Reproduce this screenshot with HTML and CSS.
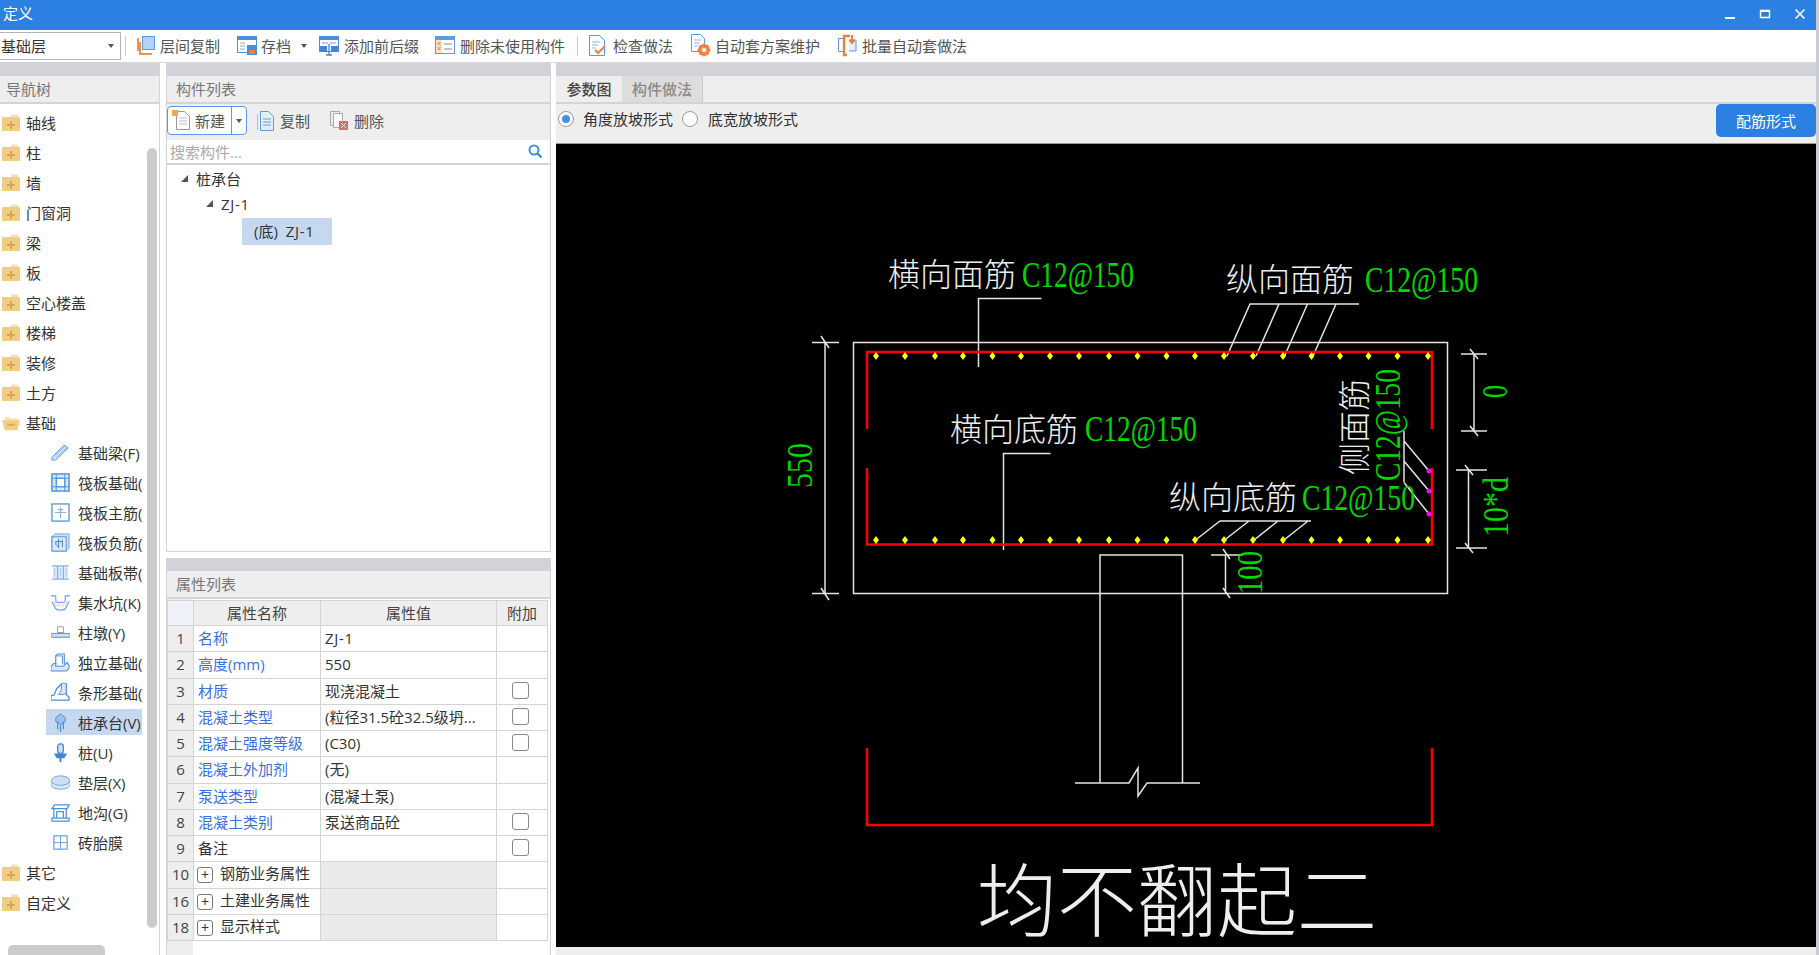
FILE: index.html
```html
<!DOCTYPE html>
<html lang="zh-CN">

<head>
    <meta charset="UTF-8">
    <title>定义</title>
    <link rel="stylesheet" href="styles.css">
</head>

<body>
    <svg class="defs" width="0" height="0">
        <symbol id="folder" viewBox="0 0 18 17">
            <path d="M9 3V1.500Q9 .5 10 .5h5q1 0 1 1V3z" fill="#f6e0b0"/>
            <rect x="0" y="3" width="18" height="14" rx="1" fill="#f0cd82"/>
            <path d="M8 7h2v3h3v2h-3v3H8v-3H5v-2h3z" fill="#d8a850"/>
        </symbol>
        <symbol id="folder-open" viewBox="0 0 20 17">
            <path d="M3 5V3q0-1 1-1h4l1 2h9v4H3z" fill="#f6e0b0"/>
            <path d="M0 6h20l-3 11H3z" fill="#f0cd82"/>
            <rect x="6" y="10" width="8" height="2" fill="#d8a850"/>
        </symbol>
        <path id="dot" d="M0-4L3 0 0 4-3 0z" fill="#ffff00"/>
    </svg>

    <div class="app">
        <header class="titlebar">
            <span class="title">定义</span>
            <div class="window-btns">
                <svg width="12" height="12" viewBox="0 0 12 12"><rect x="1" y="9" width="10" height="2" fill="#fff"/></svg>
                <svg width="12" height="12" viewBox="0 0 12 12"><path d="M1.500 2.500h9v7h-9z" fill="none" stroke="#fff" stroke-width="1.400"/><rect x="1" y="2" width="10" height="2" fill="#fff"/></svg>
                <svg width="12" height="12" viewBox="0 0 12 12"><path d="M1.500 1.500l9 9M10.500 1.500l-9 9" stroke="#fff" stroke-width="1.600"/></svg>
            </div>
        </header>

        <div class="toolbar">
            <div class="combo">
                <span>基础层</span>
                <i class="caret"></i>
            </div>
            <span class="tool-sep"></span>
            <div class="tool tool-first">
                <svg width="20" height="22" viewBox="0 0 20 22"><path d="M5 4H3v12H1V3zM5 7v11h11v2H3V7z" fill="#f0904a"/><rect x="6.500" y="1.500" width="12" height="13" fill="#b5d2f5" stroke="#5b9be0"/></svg>
                <span>层间复制</span>
            </div>
            <div class="tool tool-save">
                <svg width="21" height="22" viewBox="0 0 21 22"><rect x=".5" y="1.500" width="19" height="16" fill="#fff" stroke="#4a8fdc"/><rect x="0" y="1" width="20" height="4" fill="#4a8fdc"/><path d="M3 8h5M3 11h5M3 14h5" stroke="#aaa"/><rect x="10" y="10" width="10" height="10" fill="#4a8fdc"/><rect x="12" y="15" width="6" height="4" fill="#f0803c"/></svg>
                <span>存档</span>
                <i class="caret caret-save"></i>
            </div>
            <div class="tool tool-prefix">
                <svg width="21" height="22" viewBox="0 0 21 22"><rect x=".5" y="1.500" width="19" height="15" fill="#fff" stroke="#4a8fdc"/><rect x="0" y="1" width="20" height="4" fill="#4a8fdc"/><path d="M3 8h6M11 8h6" stroke="#999"/><rect x="1" y="11" width="7" height="6" fill="#3f86d6"/><rect x="12" y="11" width="7" height="6" fill="#3f86d6"/><path d="M10 9v11M7 20h6" stroke="#3f86d6" stroke-width="1.300"/></svg>
                <span>添加前后缀</span>
            </div>
            <div class="tool tool-clean">
                <svg width="21" height="21" viewBox="0 0 21 21"><rect x=".5" y="1.500" width="19" height="17" fill="#fff" stroke="#5b9be0"/><rect x="0" y="1" width="20" height="4" fill="#5b9be0"/><rect x="1" y="5" width="6" height="13" fill="#fbe3c8"/><path d="M2.500 7l3 3M5.500 7l-3 3M2.500 12l3 3M5.500 12l-3 3" stroke="#f0803c"/><path d="M9 9h8M9 14h8" stroke="#888"/></svg>
                <span>删除未使用构件</span>
            </div>
            <span class="tool-sep sep-check"></span>
            <div class="tool tool-check">
                <svg width="18" height="21" viewBox="0 0 18 21"><path d="M.5.500h10l5 5v15H.5z" fill="#fff" stroke="#5b9be0"/><path d="M3 7h8M3 10h6M3 13h4" stroke="#8ab6ea"/><path d="M6 15l3 3 7-7" fill="none" stroke="#f0803c" stroke-width="2"/></svg>
                <span>检查做法</span>
            </div>
            <div class="tool tool-scheme">
                <svg width="20" height="23" viewBox="0 0 20 23"><path d="M.5.500h9l4 4v13H.5z" fill="#fff" stroke="#5b9be0"/><path d="M3 6h7M3 9h5M3 12h4" stroke="#8ab6ea"/><circle cx="13" cy="16" r="4.500" fill="none" stroke="#f0803c" stroke-width="3"/><path d="M13 9.500v13M6.500 16h13M8.500 11.500l9 9M17.500 11.500l-9 9" stroke="#f0803c" stroke-width="1.600"/><circle cx="13" cy="16" r="2" fill="#fff"/></svg>
                <span>自动套方案维护</span>
            </div>
            <div class="tool tool-batch">
                <svg width="20" height="23" viewBox="0 0 20 23"><path d="M6 4.500H1.500v13H6" fill="none" stroke="#5b9be0"/><path d="M13 2H7v19h3" fill="none" stroke="#f0803c" stroke-width="2.500"/><path d="M12 6h7v11h-7" fill="#e6f0fb" stroke="#5b9be0"/><path d="M15 1v7M12.500 6l2.500 3 2.500-3" fill="none" stroke="#f0803c" stroke-width="2"/></svg>
                <span>批量自动套做法</span>
            </div>
        </div>

        <div class="workspace">
            <aside class="nav-panel">
                <div class="band"></div>
                <div class="panel-head">导航树</div>
                <div class="nav-tree">
                    <div class="nav-row"><svg class="folder-ic"><use href="#folder"/></svg>轴线</div>
                    <div class="nav-row"><svg class="folder-ic"><use href="#folder"/></svg>柱</div>
                    <div class="nav-row"><svg class="folder-ic"><use href="#folder"/></svg>墙</div>
                    <div class="nav-row"><svg class="folder-ic"><use href="#folder"/></svg>门窗洞</div>
                    <div class="nav-row"><svg class="folder-ic"><use href="#folder"/></svg>梁</div>
                    <div class="nav-row"><svg class="folder-ic"><use href="#folder"/></svg>板</div>
                    <div class="nav-row"><svg class="folder-ic"><use href="#folder"/></svg>空心楼盖</div>
                    <div class="nav-row"><svg class="folder-ic"><use href="#folder"/></svg>楼梯</div>
                    <div class="nav-row"><svg class="folder-ic"><use href="#folder"/></svg>装修</div>
                    <div class="nav-row"><svg class="folder-ic"><use href="#folder"/></svg>土方</div>
                    <div class="nav-row"><svg class="folder-ic"><use href="#folder-open"/></svg>基础</div>

                    <div class="nav-child">
                        <svg class="child-ic" viewBox="0 0 20 20"><path d="M1 15L14 2l4 3L5 18H1z" fill="#cfe0f6" stroke="#5b9be0"/><path d="M4 13l11-10M6 15L17 5" stroke="#5b9be0" stroke-width=".6"/></svg>
                        <span>基础梁(F)</span>
                    </div>
                    <div class="nav-child">
                        <svg class="child-ic" viewBox="0 0 20 20"><rect x="1" y="1" width="18" height="18" fill="#dbe8f9" stroke="#4a8fdc" stroke-width="1.500"/><rect x="5.500" y="5.500" width="9" height="9" fill="#fff" stroke="#4a8fdc"/><path d="M1 5.500h18M1 14.500h18M5.500 1v18M14.500 1v18" stroke="#4a8fdc"/></svg>
                        <span>筏板基础(</span>
                    </div>
                    <div class="nav-child">
                        <svg class="child-ic" viewBox="0 0 20 20"><rect x="1" y="1" width="18" height="18" fill="#fff" stroke="#4a8fdc" stroke-width="1.300"/><path d="M10 4v12M4 10h12M7 7h6" fill="none" stroke="#9ab0c8" stroke-width="1.300"/></svg>
                        <span>筏板主筋(</span>
                    </div>
                    <div class="nav-child">
                        <svg class="child-ic" viewBox="0 0 20 20"><path d="M1 4l3-3h15v15l-3 3H1z" fill="#cfe0f6" stroke="#6aa3e4"/><rect x="1" y="4" width="15" height="15" fill="#dbe8f9" stroke="#4a8fdc"/><path d="M8 6v10M5 9h7M12 7v8M5 12l3 3M5 9v3" fill="none" stroke="#4a7fc0"/></svg>
                        <span>筏板负筋(</span>
                    </div>
                    <div class="nav-child">
                        <svg class="child-ic" viewBox="0 0 20 20"><rect x="2" y="3" width="16" height="14" fill="#dbe8f9"/><path d="M1 3h18M1 17h18M7 3v14M13 3v14" stroke="#6aa3e4"/><path d="M4 6v8M10 6v8M16 6v8" stroke="#9ec2ee" stroke-dasharray="2 1"/></svg>
                        <span>基础板帯(</span>
                    </div>
                    <div class="nav-child">
                        <svg class="child-ic" viewBox="0 0 20 20"><path d="M0 3h5v5q0 2 2 2h6q2 0 2-2V3h5M1 9l3 6q1 3 6 3t6-3l3-6" fill="none" stroke="#6aa3e4" stroke-width="1.200"/><path d="M3 9l2 4h10l2-4" fill="none" stroke="#ccc" stroke-dasharray="1 1" stroke-width="2"/></svg>
                        <span>集水坑(K)</span>
                    </div>
                    <div class="nav-child">
                        <svg class="child-ic" viewBox="0 0 20 20"><rect x="7" y="4" width="6" height="6" fill="#fff" stroke="#999"/><rect x="0" y="11" width="20" height="4" rx="1" fill="#cfe0f6" stroke="#4a8fdc"/></svg>
                        <span>柱墩(Y)</span>
                    </div>
                    <div class="nav-child">
                        <svg class="child-ic" viewBox="0 0 20 20"><path d="M5 12V3l2-2h7v11" fill="#fff" stroke="#4a8fdc" stroke-width="1.200"/><path d="M5 3h7v9" fill="none" stroke="#4a8fdc"/><path d="M0 14l3-3h2v3h8l4-4 2 3v3l-3 3H0z" fill="#dbe8f9" stroke="#4a8fdc" stroke-width="1.200"/></svg>
                        <span>独立基础(</span>
                    </div>
                    <div class="nav-child">
                        <svg class="child-ic" viewBox="0 0 20 20"><path d="M0 18v-5h3l3-7 5-5h5v11l3 3v3z" fill="#fff" stroke="#4a8fdc" stroke-width="1.300"/><path d="M11 1v6l-3 5h5l3-1V1" fill="#dbe8f9" stroke="#4a8fdc"/></svg>
                        <span>条形基础(</span>
                    </div>
                    <div class="nav-child selected">
                        <svg class="child-ic" viewBox="0 0 20 20"><path d="M10 1l5 4v4l-5 3-5-3V5z" fill="#9ec2ee" stroke="#4a8fdc"/><path d="M7 9v8M10 12v8M13 9v8" stroke="#4a8fdc" stroke-width="1.300"/></svg>
                        <span>桩承台(V)</span>
                    </div>
                    <div class="nav-child">
                        <svg class="child-ic" viewBox="0 0 20 20"><rect x="7" y="1" width="6" height="10" rx="2.500" fill="#cfe0f6" stroke="#3f86d6" stroke-width="1.300"/><path d="M3 11h14l-3 5H6z" fill="#3f86d6"/><path d="M10 15v5" stroke="#3f86d6" stroke-width="2"/></svg>
                        <span>桩(U)</span>
                    </div>
                    <div class="nav-child">
                        <svg class="child-ic" viewBox="0 0 20 20"><path d="M0 9v3c0 3 4 5 10 5s10-2 10-5V9" fill="#dbe8f9" stroke="#6aa3e4"/><ellipse cx="10" cy="8" rx="9.500" ry="5" fill="#cfe0f6" stroke="#6aa3e4"/></svg>
                        <span>垫层(X)</span>
                    </div>
                    <div class="nav-child">
                        <svg class="child-ic" viewBox="0 0 20 20"><path d="M1 6l3-4h15l-2 4zM3 6v10M16 6v10M1 16h18v3H1zM6 9h7v7M6 9v7" fill="none" stroke="#4a8fdc" stroke-width="1.300"/></svg>
                        <span>地沟(G)</span>
                    </div>
                    <div class="nav-child">
                        <svg class="child-ic" viewBox="0 0 20 20"><rect x="3" y="3" width="14" height="14" fill="#fff" stroke="#6aa3e4" stroke-width="1.300"/><path d="M10 3v14M3 10h14" stroke="#6aa3e4"/></svg>
                        <span>砖胎膜</span>
                    </div>

                    <div class="nav-row"><svg class="folder-ic"><use href="#folder"/></svg>其它</div>
                    <div class="nav-row"><svg class="folder-ic"><use href="#folder"/></svg>自定义</div>
                </div>
                <div class="vscroll"></div>
                <div class="hscroll"></div>
            </aside>

            <section class="mid-panel">
                <div class="list-box">
                    <div class="band"></div>
                    <div class="panel-head">构件列表</div>
                    <div class="list-tools">
                        <div class="split-btn">
                            <div class="split-main">
                                <svg width="19" height="21" viewBox="0 0 19 21"><path d="M4.500 1.500h8l5 5v13h-13z" fill="#fff" stroke="#999"/><path d="M7 8h8M7 11h8M7 14h8" stroke="#bbb"/><rect x="0" y="0" width="6" height="6" fill="#f5a55a"/></svg>
                                <span>新建</span>
                            </div>
                            <div class="split-arrow"><i class="caret"></i></div>
                        </div>
                        <div class="list-tool tool-copy">
                            <svg width="17" height="20" viewBox="0 0 17 20"><path d="M3.500.500h8l5 5v14h-13z" fill="#e4eefb" stroke="#5b9be0"/><path d="M.500 3v16" stroke="#9ec2ee"/><path d="M6 8h8M6 11h8M6 14h8" stroke="#5b9be0"/></svg>
                            <span>复制</span>
                        </div>
                        <div class="list-tool tool-del">
                            <svg width="19" height="20" viewBox="0 0 19 20"><path d="M3.500 2.500h9v14h-9z" fill="#fff" stroke="#aaa"/><path d="M.500.500h9v3M.500.500v14h3" fill="none" stroke="#aaa"/><rect x="9" y="10" width="9" height="9" fill="#e06a6a"/><path d="M11 12l5 5M16 12l-5 5" stroke="#fff"/></svg>
                            <span>删除</span>
                        </div>
                    </div>
                    <div class="search-row">
                        <span>搜索构件...</span>
                        <svg width="15" height="15" viewBox="0 0 15 15"><circle cx="6" cy="6" r="4.500" fill="none" stroke="#3f8fdc" stroke-width="2"/><path d="M9.500 9.500l4 4" stroke="#3f8fdc" stroke-width="2.400"/></svg>
                    </div>
                    <div class="comp-tree">
                        <div class="comp-row lvl-1"><i class="tri"></i>桩承台</div>
                        <div class="comp-row lvl-2"><i class="tri"></i><span class="code">ZJ-1</span></div>
                        <div class="comp-sel">(底)&nbsp; <span class="code">ZJ-1</span></div>
                    </div>
                </div>

                <div class="prop-box">
                    <div class="band"></div>
                    <div class="panel-head">属性列表</div>
                    <table class="prop-table">
                        <thead>
                            <tr><th class="num"></th><th>属性名称</th><th>属性值</th><th>附加</th></tr>
                        </thead>
                        <tbody>
                            <tr><td class="num">1</td><td class="link">名称</td><td><span class="code">ZJ-1</span></td><td></td></tr>
                            <tr><td class="num">2</td><td class="link">高度(mm)</td><td>550</td><td></td></tr>
                            <tr><td class="num">3</td><td class="link">材质</td><td>现浇混凝土</td><td class="chk"><i></i></td></tr>
                            <tr><td class="num">4</td><td class="link">混凝土类型</td><td>(粒径31.5砼32.5级坍...</td><td class="chk"><i></i></td></tr>
                            <tr><td class="num">5</td><td class="link">混凝土强度等级</td><td>(C30)</td><td class="chk"><i></i></td></tr>
                            <tr><td class="num">6</td><td class="link">混凝土外加剂</td><td>(无)</td><td></td></tr>
                            <tr><td class="num">7</td><td class="link">泵送类型</td><td>(混凝土泵)</td><td></td></tr>
                            <tr><td class="num">8</td><td class="link">混凝土类别</td><td>泵送商品砼</td><td class="chk"><i></i></td></tr>
                            <tr><td class="num">9</td><td>备注</td><td></td><td class="chk"><i></i></td></tr>
                            <tr><td class="num">10</td><td class="group"><b class="plus">+</b>钢筋业务属性</td><td class="shade"></td><td></td></tr>
                            <tr><td class="num">16</td><td class="group"><b class="plus">+</b>土建业务属性</td><td class="shade"></td><td></td></tr>
                            <tr><td class="num">18</td><td class="group"><b class="plus">+</b>显示样式</td><td class="shade"></td><td></td></tr>
                        </tbody>
                    </table>
                </div>
            </section>

            <section class="draw-panel">
                <div class="band"></div>
                <div class="tabs">
                    <div class="tab active">参数图</div>
                    <div class="tab">构件做法</div>
                </div>
                <div class="form-row">
                    <div class="radio on"></div>
                    <span class="radio-label">角度放坡形式</span>
                    <div class="radio"></div>
                    <span class="radio-label">底宽放坡形式</span>
                    <button class="rebar-btn">配筋形式</button>
                </div>

                <!-- 参数图, coordinates are page pixels -->
                <svg class="cad" viewBox="556 143 1260 803">
                    <g fill="none" stroke="#e4e4e4" stroke-width="1.500">
                        <rect x="853.500" y="341.500" width="594" height="251"/>
                        <path d="M1100 593V554h82.500v228M1100 593v189"/>
                        <path d="M1075 782h54l9-15v28l9-13h53"/>
                        <!-- 标注 -->
                        <path d="M825 341v252M812 341.500h27M812 592.500h27M821 335l8 12M821 587l8 12"/>
                        <path d="M1474 353v77M1461 353h26M1461 430h26M1470 348l8 10M1470 425l8 10"/>
                        <path d="M1468.500 469v78M1456 469h31M1456 547h31M1465 464l8 10M1465 542l8 10"/>
                        <path d="M1225.500 554v39M1211 554h32M1223 548l7 10M1223 587l7 10"/>
                        <!-- 引线 -->
                        <path d="M1041.500 297.500H978.500V366"/>
                        <path d="M1359 303H1250l-23 52M1279 303l-23 52M1307.500 303l-23 52M1336 303l-23 52"/>
                        <path d="M1050.500 452.500H1003.500V549"/>
                        <path d="M1311 520h-91l-24.500 19M1249 520l-24.500 19M1278 520l-24 19M1308 520l-24 19"/>
                        <path d="M1404 430v51M1404 440l25 30M1404 460l25 30M1404 481.500l25 31.500"/>
                    </g>

                    <g fill="none" stroke="#ff0000" stroke-width="2.500">
                        <path d="M867 428V351H1432V428"/>
                        <path d="M867 467V543.500H1432V467"/>
                        <path d="M867 747V824H1432V747"/>
                    </g>

                    <use href="#dot" x="876" y="355"/><use href="#dot" x="905" y="355"/><use href="#dot" x="935" y="355"/><use href="#dot" x="963" y="355"/><use href="#dot" x="992.500" y="355"/>
                    <use href="#dot" x="1021" y="355"/><use href="#dot" x="1050" y="355"/><use href="#dot" x="1079" y="355"/><use href="#dot" x="1109" y="355"/><use href="#dot" x="1137.500" y="355"/>
                    <use href="#dot" x="1166.500" y="355"/><use href="#dot" x="1195" y="355"/><use href="#dot" x="1224" y="355"/><use href="#dot" x="1253" y="355"/><use href="#dot" x="1283" y="355"/>
                    <use href="#dot" x="1311.500" y="355"/><use href="#dot" x="1340" y="355"/><use href="#dot" x="1368.500" y="355"/><use href="#dot" x="1397.500" y="355"/><use href="#dot" x="1428" y="355"/>
                    <use href="#dot" x="876" y="539"/><use href="#dot" x="905" y="539"/><use href="#dot" x="935" y="539"/><use href="#dot" x="963" y="539"/><use href="#dot" x="992.500" y="539"/>
                    <use href="#dot" x="1021" y="539"/><use href="#dot" x="1050" y="539"/><use href="#dot" x="1079" y="539"/><use href="#dot" x="1109" y="539"/><use href="#dot" x="1137.500" y="539"/>
                    <use href="#dot" x="1166.500" y="539"/><use href="#dot" x="1195" y="539"/><use href="#dot" x="1224" y="539"/><use href="#dot" x="1253" y="539"/><use href="#dot" x="1283" y="539"/>
                    <use href="#dot" x="1311.500" y="539"/><use href="#dot" x="1340" y="539"/><use href="#dot" x="1368.500" y="539"/><use href="#dot" x="1397.500" y="539"/><use href="#dot" x="1428" y="539"/>
                    <g fill="#ff00ff">
                        <circle cx="1429" cy="470" r="2.500"/><circle cx="1429" cy="490" r="2.500"/><circle cx="1429" cy="513" r="2.500"/>
                    </g>

                    <g class="cad-white">
                        <text x="888" y="285">横向面筋</text>
                        <text x="1226" y="290">纵向面筋</text>
                        <text x="950" y="440">横向底筋</text>
                        <text x="1169" y="508">纵向底筋</text>
                        <text transform="translate(1366 474) rotate(-90)">侧面筋</text>
                        <text class="cad-big" x="977" y="929">均不翻起二</text>
                    </g>
                    <g class="cad-green">
                        <text x="1022" y="286" textLength="112" lengthAdjust="spacingAndGlyphs">C12@150</text>
                        <text x="1365" y="291" textLength="113" lengthAdjust="spacingAndGlyphs">C12@150</text>
                        <text x="1085" y="440" textLength="112" lengthAdjust="spacingAndGlyphs">C12@150</text>
                        <text x="1302" y="509" textLength="113" lengthAdjust="spacingAndGlyphs">C12@150</text>
                        <text transform="translate(1400 480) rotate(-90)" textLength="112" lengthAdjust="spacingAndGlyphs">C12@150</text>
                        <text transform="translate(812 487) rotate(-90)" textLength="45" lengthAdjust="spacingAndGlyphs">550</text>
                        <text transform="translate(1507 397) rotate(-90)" textLength="13" lengthAdjust="spacingAndGlyphs">0</text>
                        <text transform="translate(1508 536) rotate(-90)" textLength="60" lengthAdjust="spacingAndGlyphs">10*d</text>
                        <text transform="translate(1262 593) rotate(-90)" textLength="43" lengthAdjust="spacingAndGlyphs">100</text>
                    </g>
                </svg>
                <div class="statusbar"></div>
            </section>
        </div>
    </div>
</body>

</html>
```

FILE: styles.css
```css
/* 定义窗口 */
body {
    margin: 0;
    height: 955px;
    overflow: hidden;
    background-color: #c8ccd2;
    font-family: "Open Sans", "Noto Sans CJK SC", sans-serif;
    font-size: 15px;
    color: #333;
}

.defs {
    position: absolute;
}

.app {
    width: 1816px;
    height: 955px;
    display: flex;
    flex-direction: column;
    background-color: #fff;
}

.titlebar {
    height: 30px;
    flex: none;
    background-color: #2c80e2;
    color: #fff;
    display: flex;
    align-items: center;
    justify-content: space-between;
    padding: 0 10px 6px 3px;
    box-sizing: border-box;
}

.window-btns {
    display: flex;
    gap: 23px;
    margin-top: 3px;
}

.toolbar {
    height: 33px;
    flex: none;
    box-sizing: border-box;
    border-bottom: 1px solid #d8d8dc;
    padding-bottom: 1px;
    display: flex;
    align-items: center;
    color: #555;
}

.combo {
    width: 121px;
    height: 28px;
    box-sizing: border-box;
    border: 1px solid #b4b4b4;
    border-left: none;
    display: flex;
    align-items: center;
    justify-content: space-between;
    padding: 0 6px 0 1px;
    color: #333;
    flex: none;
}

.caret {
    display: inline-block;
    border-left: 3.500px solid transparent;
    border-right: 3.500px solid transparent;
    border-top: 4px solid #555;
}

.tool-sep {
    width: 1px;
    height: 20px;
    background-color: #ccc;
    margin-left: 4px;
    flex: none;
}

.tool {
    display: flex;
    align-items: center;
    flex: none;
    gap: 4px;
    white-space: nowrap;
}

.tool-first {
    margin-left: 10px;
}

.tool-save {
    margin-left: 17px;
    gap: 3px;
}

.caret-save {
    margin-left: 7px;
}

.tool-prefix {
    margin-left: 12px;
}

.tool-clean {
    margin-left: 16px;
}

.sep-check {
    margin-left: 12px;
}

.tool-check {
    margin-left: 11px;
    gap: 6px;
}

.tool-scheme {
    margin-left: 18px;
}

.tool-batch {
    margin-left: 17px;
    gap: 5px;
}

.workspace {
    flex: 1;
    display: flex;
    min-height: 0;
}

.band {
    height: 13px;
    background-color: #d2d3d8;
    flex: none;
}

.panel-head {
    height: 26px;
    background-color: #eeeeee;
    border-bottom: 2px solid #d4d4d4;
    color: #777;
    line-height: 26px;
    padding-left: 6px;
    flex: none;
}

.mid-panel .panel-head {
    padding-left: 9px;
}

/* 导航树 */
.nav-panel {
    width: 160px;
    flex: none;
    position: relative;
    border-right: 1px solid #d4d4d4;
    box-sizing: border-box;
    overflow: hidden;
}

.nav-tree {
    padding-top: 3px;
}

.nav-row {
    height: 30px;
    display: flex;
    align-items: center;
    gap: 6px;
    padding-left: 2px;
}

.folder-ic {
    width: 18px;
    height: 17px;
    flex: none;
}

.nav-child {
    height: 30px;
    width: 96px;
    margin-left: 46px;
    display: flex;
    align-items: center;
    gap: 8px;
    padding-left: 5px;
    box-sizing: border-box;
    overflow: hidden;
    white-space: nowrap;
}

.nav-child.selected {
    background-color: #c5d8f0;
    background-clip: content-box;
    padding: 2px 0;
}

.nav-child.selected .child-ic {
    margin-left: 5px;
}

.child-ic {
    width: 19px;
    height: 19px;
    flex: none;
}

.vscroll {
    position: absolute;
    left: 147px;
    top: 85px;
    width: 10px;
    height: 780px;
    background-color: #cbcbcb;
    border-radius: 5px;
}

.hscroll {
    position: absolute;
    left: 8px;
    bottom: 0;
    width: 97px;
    height: 10px;
    background-color: #cbcbcb;
    border-radius: 5px 5px 0 0;
}

/* 构件列表 */
.mid-panel {
    width: 385px;
    flex: none;
    margin-left: 6px;
    display: flex;
    flex-direction: column;
    gap: 6px;
}

.list-box {
    height: 489px;
    box-sizing: border-box;
    border: 1px solid #d4d4d4;
    border-top: none;
}

.list-tools {
    height: 36px;
    box-sizing: border-box;
    padding-bottom: 3px;
    background-color: #eeeeee;
    display: flex;
    align-items: center;
    color: #555;
}

.split-btn {
    width: 80px;
    height: 29px;
    box-sizing: border-box;
    border: 1px solid #5a9be8;
    border-radius: 4px;
    background-color: #fff;
    display: flex;
    flex: none;
}

.split-main {
    flex: 1;
    display: flex;
    align-items: center;
    gap: 4px;
    padding-left: 4px;
    border-right: 1px solid #5a9be8;
}

.split-arrow {
    width: 14px;
    display: flex;
    align-items: center;
    justify-content: center;
}

.list-tool {
    display: flex;
    align-items: center;
    gap: 6px;
}

.tool-copy {
    margin-left: 10px;
}

.tool-del {
    margin-left: 20px;
    gap: 5px;
}

.search-row {
    height: 25px;
    box-sizing: border-box;
    border-bottom: 2px solid #d4d4d4;
    display: flex;
    align-items: center;
    justify-content: space-between;
    padding: 0 7px 0 3px;
    color: #aaa;
}

.comp-tree {
    padding-top: 1px;
}

.comp-row {
    height: 25px;
    display: flex;
    align-items: center;
    gap: 8px;
}

.lvl-1 {
    padding-left: 14px;
}

.lvl-2 {
    padding-left: 39px;
}

.tri {
    width: 0;
    height: 0;
    border-left: 7px solid transparent;
    border-bottom: 7px solid #555;
}

.code {
    letter-spacing: .7px;
}

.comp-sel {
    margin: 2px 0 0 75px;
    width: 90px;
    height: 27px;
    background-color: #c5d8f0;
    line-height: 27px;
    padding-left: 12px;
    box-sizing: border-box;
    white-space: nowrap;
}

/* 属性列表 */
.prop-box {
    flex: 1;
    box-sizing: border-box;
    border-left: 1px solid #d4d4d4;
    border-right: 1px solid #d4d4d4;
    background: linear-gradient(#eeeeee, #eeeeee) left / 26px 100% no-repeat;
}

.prop-table {
    width: 381px;
    table-layout: fixed;
    border-collapse: collapse;
    margin-top: 1px;
    background-color: #fff;
}

.prop-table th,
.prop-table td {
    height: 26.250px;
    padding: 0 0 0 4px;
    box-sizing: border-box;
    border: 1px solid #d4d4d4;
    font-weight: normal;
    white-space: nowrap;
    overflow: hidden;
    line-height: 1;
}

.prop-table th {
    background-color: #eeeeee;
    color: #444;
    padding: 0;
    height: 25px;
}

.prop-table th.num {
    background-color: #eff3f9;
    width: 26px;
}

.prop-table th:nth-child(2) {
    width: 127px;
}

.prop-table th:nth-child(3) {
    width: 176px;
}

.prop-table td.num {
    background-color: #eeeeee;
    text-align: center;
    padding: 0;
    color: #444;
}

.link {
    color: #3a6fe0;
}

.chk {
    text-align: center;
}

.chk i {
    display: block;
    width: 17px;
    height: 17px;
    box-sizing: border-box;
    margin: 0 0 2px 11px;
    border: 1px solid #888;
    border-radius: 3px;
}

.prop-table .group {
    padding-left: 3px;
}

.plus {
    display: inline-block;
    width: 16px;
    height: 16px;
    box-sizing: border-box;
    border: 1px solid #777;
    border-radius: 3px;
    font-weight: normal;
    font-size: 14px;
    line-height: 13px;
    text-align: center;
    margin-right: 7px;
    vertical-align: -1px;
}

.shade {
    background-color: #eaeaea;
}

/* 参数图 */
.draw-panel {
    flex: 1;
    margin-left: 5px;
    min-width: 0;
    display: flex;
    flex-direction: column;
    background-color: #eeeeee;
}

.tabs {
    height: 26px;
    display: flex;
    border-bottom: 2px solid #d4d4d4;
    flex: none;
}

.tab {
    height: 26px;
    width: 66px;
    line-height: 26px;
    text-align: center;
    font-weight: 500;
    color: #444;
    flex: none;
}

.tab + .tab {
    width: 81px;
    background-color: #dddddd;
    color: #8a8a8a;
    border-right: 1px solid #ccc;
    box-sizing: border-box;
}

.form-row {
    height: 40px;
    flex: none;
    box-sizing: border-box;
    display: flex;
    align-items: flex-start;
    padding-top: 7px;
}

.radio {
    width: 16px;
    height: 16px;
    box-sizing: border-box;
    margin-left: 2px;
    border: 1px solid #999;
    border-radius: 50%;
    background-color: #fff;
    position: relative;
    flex: none;
}

.radio.on::after {
    content: "";
    position: absolute;
    left: 3px;
    top: 3px;
    width: 8px;
    height: 8px;
    border-radius: 50%;
    background-color: #3f8fee;
}

.radio-label {
    margin: 0 6px 0 9px;
    line-height: 16px;
    flex: none;
    width: 91px;
}

.radio-label:last-of-type {
    margin-left: 10px;
}

.rebar-btn {
    margin: -7px 0 0 auto;
    width: 100px;
    height: 33px;
    border: none;
    border-radius: 5px;
    background-color: #2c80e2;
    color: #fff;
    font: inherit;
}

.cad {
    width: 1260px;
    height: 803px;
    flex: none;
    display: block;
    overflow: visible;
    background-color: #000;
    box-shadow: 0 -1px 0 #999;
}

.cad-white {
    font-family: "Noto Sans CJK SC", sans-serif;
    font-weight: 300;
    font-size: 32px;
    fill: #eeeeee;
}

.cad-big {
    font-size: 80px;
}

.cad-green {
    font-family: "Liberation Serif", serif;
    font-size: 36px;
    fill: #00d800;
}

.statusbar {
    flex: 1;
}
```
